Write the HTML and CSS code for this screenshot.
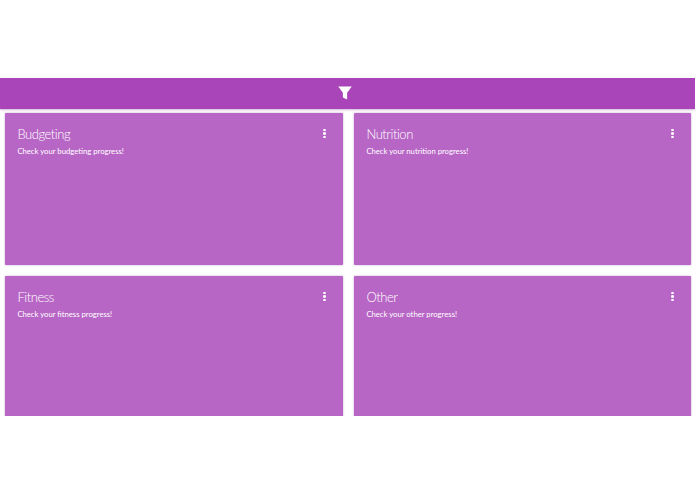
FILE: index.html
```html
<!DOCTYPE html>
<html lang="en">
<head>
<meta charset="utf-8">
<title>Progress</title>
<link rel="stylesheet" href="styles.css">
</head>
<body>
<div class="app">
  <header class="toolbar">
    <svg class="filter" viewBox="0 0 14 14" width="14" height="14" aria-hidden="true"><path d="M0.2 0.6h13.6L9.1 6.8v6.8L4.9 11.4V6.8z"/></svg>
  </header>
  <main class="grid">
    <section class="card">
      <div class="head"><h2>Budgeting</h2><span class="dots"><i></i><i></i><i></i></span></div>
      <p>Check your budgeting progress!</p>
    </section>
    <section class="card">
      <div class="head"><h2>Nutrition</h2><span class="dots"><i></i><i></i><i></i></span></div>
      <p>Check your nutrition progress!</p>
    </section>
    <section class="card">
      <div class="head"><h2>Fitness</h2><span class="dots"><i></i><i></i><i></i></span></div>
      <p>Check your fitness progress!</p>
    </section>
    <section class="card">
      <div class="head"><h2>Other</h2><span class="dots"><i></i><i></i><i></i></span></div>
      <p>Check your other progress!</p>
    </section>
  </main>
</div>
</body>
</html>
```
FILE: styles.css
```css
html, body {
  margin: 0;
  padding: 0;
  background: #fff;
}
body {
  font-family: Lato, "Open Sans", sans-serif;
  color: #fff;
  overflow: hidden;
}
.app {
  padding-top: 78px;
  height: 338px;
  overflow: hidden;
}
.toolbar {
  height: 31px;
  background: #a945b8;
  display: flex;
  align-items: center;
  justify-content: center;
  box-shadow: 0 1px 2px rgba(120, 40, 140, .35);
}
.filter {
  fill: #fff;
  margin: 0 6px 1px 0;
}
.grid {
  display: grid;
  grid-template-columns: 338px 337px;
  grid-auto-rows: 152px;
  column-gap: 11px;
  row-gap: 11px;
  padding: 4px 4px 0 5px;
}
.card {
  background: #b866c6;
  box-shadow: 0 0 2px rgba(130, 50, 150, .5);
  border-radius: 1px;
  padding: 12px 12.5px 12px 12.4px;
}
.head {
  display: flex;
  justify-content: space-between;
  align-items: flex-start;
}
h2 {
  margin: 0;
  font-size: 13px;
  line-height: 18px;
  font-weight: 300;
  letter-spacing: -.45px;
}
.dots {
  display: flex;
  flex-direction: column;
  gap: 1px;
  margin: 3.5px 4.5px 0 0;
}
.dots i {
  display: block;
  width: 3px;
  height: 2.5px;
  border-radius: 50%;
  background: #fff;
}
p {
  margin: 2px 0 0;
  font-size: 7.7px;
  line-height: 12px;
}
```
